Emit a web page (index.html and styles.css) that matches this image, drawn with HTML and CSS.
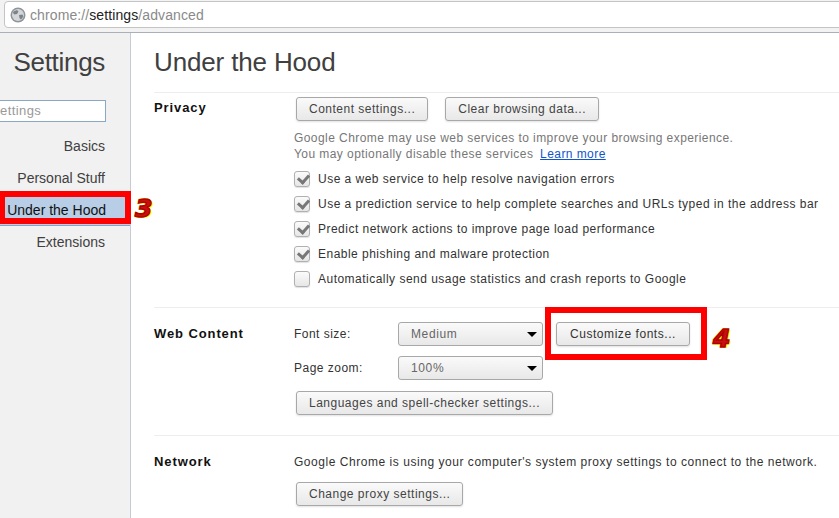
FILE: index.html
```html
<!DOCTYPE html>
<html lang="en">
<head>
<meta charset="utf-8">
<title>Settings - Under the Hood</title>
<link rel="stylesheet" href="styles.css">
</head>
<body>
<div class="toolbar">
  <div class="omnibox">
    <svg class="globe" width="16" height="16" viewBox="0 0 16 16"><circle cx="8" cy="8" r="7.5" fill="#8f9499"/><circle cx="8" cy="8" r="6" fill="#d4d7da"/><path d="M3.5 4.5 7 3l1.5 1.5L7 7 4.5 7.5 3 6zM9 8l3.5-.5.8 2-2.3 3.3L9.5 11z" fill="#7e8388"/></svg>
    <span class="url">chrome://<b class="host">settings</b>/advanced</span>
  </div>
</div>
<div class="page">
  <nav class="sidebar">
    <h1 class="side-title">Settings</h1>
    <div class="search">ettings</div>
    <ul class="nav">
      <li class="nav-item">Basics</li>
      <li class="nav-item">Personal Stuff</li>
      <li class="nav-item selected">Under the Hood</li>
      <li class="nav-item">Extensions</li>
    </ul>
  </nav>
  <main class="main">
    <h2 class="page-title">Under the Hood</h2>
    <section class="section privacy">
      <h3 class="section-title">Privacy</h3>
      <div class="section-body">
        <div class="btn-row">
          <button class="btn">Content settings...</button>
          <button class="btn">Clear browsing data...</button>
        </div>
        <p class="note">Google Chrome may use web services to improve your browsing experience.<br>You may optionally disable these services <a class="link">Learn more</a></p>
        <label class="check"><span class="box on"></span>Use a web service to help resolve navigation errors</label>
        <label class="check"><span class="box on"></span>Use a prediction service to help complete searches and URLs typed in the address bar</label>
        <label class="check"><span class="box on"></span>Predict network actions to improve page load performance</label>
        <label class="check"><span class="box on"></span>Enable phishing and malware protection</label>
        <label class="check"><span class="box"></span>Automatically send usage statistics and crash reports to Google</label>
      </div>
    </section>
    <section class="section web">
      <h3 class="section-title">Web Content</h3>
      <div class="section-body">
        <div class="form-row">
          <span class="form-label">Font size:</span>
          <div class="select">Medium</div>
          <button class="btn customize">Customize fonts...</button>
        </div>
        <div class="form-row">
          <span class="form-label">Page zoom:</span>
          <div class="select">100%</div>
        </div>
        <button class="btn lang">Languages and spell-checker settings...</button>
      </div>
    </section>
    <section class="section network">
      <h3 class="section-title">Network</h3>
      <div class="section-body">
        <p class="proxy-text">Google Chrome is using your computer's system proxy settings to connect to the network.</p>
        <button class="btn">Change proxy settings...</button>
      </div>
    </section>
  </main>
</div>
<div class="red-box box-three"></div>
<div class="red-box box-four"></div>
<span class="marker marker-three">3</span>
<span class="marker marker-four">4</span>
</body>
</html>
```
FILE: styles.css
```css
* { box-sizing: border-box; }
html, body { margin: 0; height: 518px; overflow: hidden; }
body {
  position: relative;
  background: #fff;
  color: #303030;
  font-family: "Liberation Sans", Arial, sans-serif;
  font-size: 12px;
  letter-spacing: 0.48px;
}
.toolbar {
  height: 33px;
  padding: 1px 0 0 4px;
  background: #f2f2f2;
  border-bottom: 1px solid #a9b0b8;
}
.omnibox {
  display: flex;
  align-items: center;
  height: 27px;
  margin-right: -20px;
  padding-left: 5px;
  background: #fff;
  border: 1px solid #c4c4c4;
  border-radius: 4px;
}
.globe { flex: none; margin-right: 4px; }
.url { font-size: 14px; color: #8a8a8a; letter-spacing: 0.1px; }
.host { font-weight: normal; color: #222; }
.page { display: flex; height: 485px; }
.sidebar {
  flex: none;
  width: 131px;
  background: #f1f1f1;
  border-right: 1px solid #c6cbd6;
}
.side-title {
  margin: 13px 25px 0 0;
  text-align: right;
  font-size: 26px;
  line-height: 32px;
  font-weight: normal;
  letter-spacing: -0.3px;
  color: #404040;
}
.search {
  width: 106px;
  height: 22px;
  margin: 22px 0 0;
  padding-left: 0;
  background: #fff;
  border: 1px solid #8aa8c4;
  border-left: 0;
  color: #999;
  font-size: 13px;
  line-height: 20px;
  letter-spacing: 0.42px;
}
.nav { list-style: none; margin: 8px 0 0; padding: 0; }
.nav-item {
  height: 32px;
  padding-right: 25px;
  text-align: right;
  font-size: 14px;
  line-height: 32px;
  color: #404040;
  letter-spacing: 0;
}
.selected {
  background: #b8cde6;
  border-bottom: 1px solid #8aa0c4;
  color: #111;
  padding-right: 24px;
}
.main { flex: 1; min-width: 0; padding: 0 0 0 23px; overflow: hidden; }
.page-title {
  margin: 0;
  padding: 13px 0 7px;
  height: 60px;
  font-size: 26px;
  line-height: 32px;
  font-weight: normal;
  letter-spacing: -0.15px;
  color: #404040;
  border-bottom: 1px solid #eee;
}
.section { display: flex; border-bottom: 1px solid #eee; }
.section-title {
  flex: none;
  width: 140px;
  margin: 0;
  font-size: 13px;
  font-weight: bold;
  line-height: 16px;
  letter-spacing: 0.9px;
  color: #111;
}
.section-body { flex: 1; min-width: 0; }
.privacy { height: 215px; padding-top: 7px; }
.web { height: 128px; padding-top: 16px; }
.web .section-title { margin-top: 2px; }
.network { border-bottom: 0; padding-top: 18px; }
.btn {
  display: block;
  height: 24px;
  padding: 0 12px;
  background: linear-gradient(#fafafa, #e8e8e8);
  border: 1px solid #a8a8a8;
  border-radius: 3px;
  box-shadow: 0 1px 2px rgba(0,0,0,.12);
  font: inherit;
  letter-spacing: 0.5px;
  color: #444;
  white-space: nowrap;
}
.btn-row { display: flex; gap: 17px; margin-left: 2px; margin-top: -3px; }
.note { margin: 9px 0 0; line-height: 16px; color: #777; letter-spacing: 0.43px; white-space: nowrap; }
.link { margin-left: 3px; color: #1155cc; text-decoration: underline; }
.check {
  display: flex;
  align-items: center;
  height: 25px;
  white-space: nowrap;
  color: #333;
}
.note + .check { margin-top: 4px; }
.box {
  flex: none;
  width: 16px;
  height: 16px;
  margin-right: 8px;
  background: linear-gradient(#fbfbfb, #e6e6e6);
  border: 1px solid #b0b0b0;
  border-radius: 3px;
  box-shadow: 0 1px 1px rgba(0,0,0,.12);
  position: relative;
}
.box.on::after {
  content: "";
  position: absolute;
  left: 3px;
  top: 2px;
  width: 8px;
  height: 5px;
  border-left: 3px solid #777;
  border-bottom: 3px solid #777;
  transform: rotate(-48deg);
}
.form-row { display: flex; align-items: center; height: 34px; margin-top: -7px; margin-bottom: 7px; }
.form-label { flex: none; width: 104px; color: #333; }
.select {
  flex: none;
  position: relative;
  width: 145px;
  height: 24px;
  padding-left: 12px;
  background: linear-gradient(#fafafa, #e8e8e8);
  border: 1px solid #a8a8a8;
  border-radius: 3px;
  line-height: 22px;
  color: #666;
  letter-spacing: 0.62px;
}
.select::after {
  content: "";
  position: absolute;
  right: 5px;
  top: 9px;
  border: 5px solid transparent;
  border-top: 5px solid #000;
  border-bottom: 0;
}
.customize { margin-left: 13px; padding: 0 13px; color: #333; letter-spacing: 0.55px; }
.lang { margin: -1px 0 0 2px; }
.proxy-text { margin: 0; line-height: 16px; color: #333; white-space: nowrap; letter-spacing: 0.54px; }
.network .btn { margin: 12px 0 0 2px; }
.red-box { position: absolute; border: 6px solid #f00; }
.box-three { left: 0; top: 191px; width: 131px; height: 33px; border-width: 6px 6px 6px 5px; }
.box-four { left: 545px; top: 307px; width: 162px; height: 53px; }
.marker {
  position: absolute;
  font-family: "DejaVu Sans", sans-serif;
  font-weight: bold;
  font-style: italic;
  font-size: 25px;
  line-height: 24px;
  color: #c81010;
  -webkit-text-stroke: 1.5px #b00000;
  text-shadow: -1px 0 #ff0, 1px 0 #ff0, 0 -1px #ff0, 0 1px #ff0, 2px 1px #ff0;
}
.marker-three { left: 135px; top: 197px; }
.marker-four { left: 713px; top: 327px; }
```
